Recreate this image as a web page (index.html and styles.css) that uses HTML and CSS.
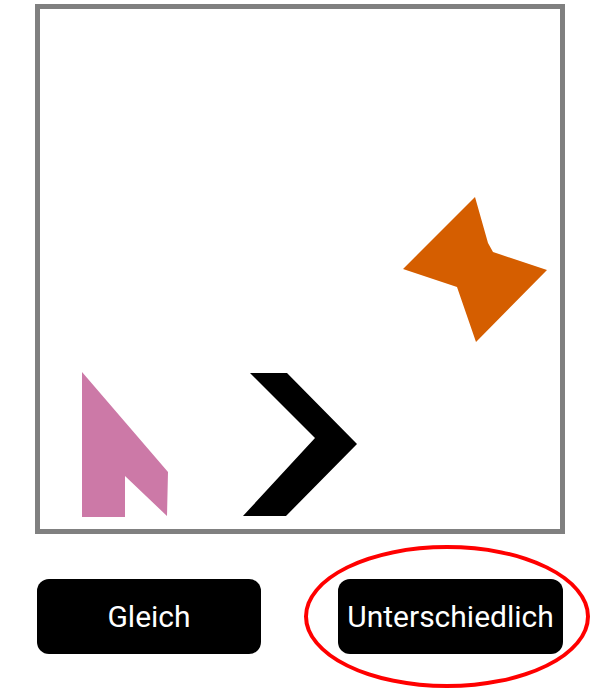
FILE: index.html
```html
<!DOCTYPE html>
<html>
<head>
<meta charset="utf-8">
<link rel="stylesheet" href="styles.css">
</head>
<body>
<div class="canvas">
  <svg class="shapes" width="520" height="520" viewBox="0 0 520 520">
    <polygon fill="#D55E00" points="435,188 448,234 453,243 507,261 436,333 417,278 363,260"/>
    <polygon fill="#CC79A7" points="42,363 128,463 127,507 85,467 85,508 42,508"/>
    <polygon fill="#000000" points="210,364 247,364 317,435 246,507 203,507 275,429"/>
  </svg>
</div>
<div class="buttons">
  <div class="btn">Gleich</div>
  <div class="btn selected">Unterschiedlich<span class="ring"></span></div>
</div>
</body>
</html>
```
FILE: styles.css
```css
html, body {
  margin: 0;
  padding: 0;
  background: #ffffff;
}
body {
  width: 600px;
  height: 700px;
  overflow: hidden;
  font-family: Roboto, "Liberation Sans", sans-serif;
}
.canvas {
  margin: 4px 0 0 35px;
  width: 520px;
  height: 520px;
  border: 5px solid #808080;
  background: #fff;
}
.shapes {
  display: block;
}
.buttons {
  display: flex;
  gap: 77px;
  margin: 45px 0 0 37px;
}
.btn {
  position: relative;
  width: 224px;
  height: 75px;
  background: #000;
  color: #fff;
  border-radius: 12px;
  display: flex;
  align-items: center;
  justify-content: center;
  font-size: 30px;
}
.btn.selected {
  width: 225px;
}
.ring {
  position: absolute;
  left: -34px;
  top: -34px;
  width: 278px;
  height: 135px;
  border: 4px solid #ff0000;
  border-radius: 50%;
}
```
